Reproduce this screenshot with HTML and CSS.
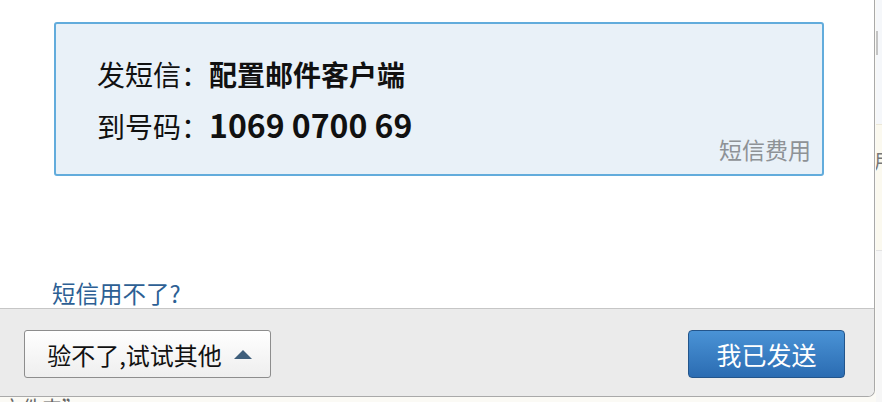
FILE: index.html
```html
<!DOCTYPE html>
<html lang="zh-CN">
<head>
<meta charset="utf-8">
<title>短信验证</title>
<link rel="stylesheet" href="styles.css">
</head>
<body>
<div class="page">
  <div class="page-main">
    <div class="page-foot">文件夹”</div>
  </div>
  <div class="page-side">
    <div class="side-top"><span class="side-thumb"></span></div>
    <div class="side-mid">用</div>
    <div class="side-low"></div>
  </div>
</div>

<div class="dialog">
  <div class="dialog-body">
    <div class="sms-box">
      <p class="sms-row"><span class="sms-label">发短信：</span><strong class="sms-value">配置邮件客户端</strong></p>
      <p class="sms-row"><span class="sms-label">到号码：</span><strong class="sms-value sms-num">1069 0700 69</strong></p>
      <span class="sms-fee">短信费用</span>
    </div>
    <a class="help-link" href="#">短信用不了?</a>
  </div>
  <div class="dialog-footer">
    <button class="btn btn-other" type="button">验不了,试试其他<span class="caret-up"></span></button>
    <button class="btn btn-primary" type="button">我已发送</button>
  </div>
</div>
</body>
</html>
```
FILE: styles.css
```css
html, body {
  margin: 0;
  padding: 0;
}
body {
  width: 882px;
  height: 402px;
  overflow: hidden;
  position: relative;
  background: #fbfaf5;
  font-family: "Noto Sans CJK SC", "Noto Sans", sans-serif;
  color: #111;
}

/* background page behind the dialog */
.page {
  display: grid;
  grid-template-columns: 1fr 6px;
  height: 402px;
}
.page-main {
  display: flex;
  flex-direction: column;
  justify-content: flex-end;
}
.page-foot {
  font-size: 20px;
  line-height: 20px;
  color: #666;
  margin-left: 2px;
  margin-bottom: -16px;
}
.page-side {
  display: flex;
  flex-direction: column;
}
.side-top {
  height: 124px;
  background: #f5f7fa;
  border-bottom: 1px solid #ece8d8;
}
.side-thumb {
  display: block;
  width: 2px;
  height: 24px;
  margin-top: 31px;
  background: #c4c4c4;
}
.side-mid {
  height: 125px;
  background: #fbf9ef;
  font-size: 20px;
  line-height: 20px;
  padding-top: 26px;
  box-sizing: border-box;
  color: #777;
  overflow: hidden;
  text-indent: -2px;
}
.side-low {
  flex: 1;
  background: #f6f6f6;
  border-top: 1px solid #e2e2e2;
}

/* dialog overlay */
.dialog {
  position: absolute;
  left: 0;
  top: 0;
  width: 875px;
  height: 397px;
  box-sizing: border-box;
  background: #fff;
  border-right: 1px solid #a9a9a9;
  border-bottom: 1px solid #a9a9a9;
  border-bottom-right-radius: 7px;
  display: flex;
  flex-direction: column;
  overflow: hidden;
}
.dialog-body {
  height: 308px;
  padding: 22px 0 0 54px;
  box-sizing: border-box;
  display: flex;
  flex-direction: column;
  align-items: flex-start;
}
.sms-box {
  position: relative;
  width: 770px;
  height: 154px;
  box-sizing: border-box;
  border: 2px solid #62acdc;
  border-radius: 3px;
  background: #e9f1f8;
  padding: 25px 0 0 41px;
}
.sms-row {
  margin: 0;
  font-size: 28px;
  line-height: 50px;
  height: 50px;
  white-space: nowrap;
}
.sms-label {
  font-weight: 400;
}
.sms-value {
  font-weight: 700;
}
.sms-num {
  font-size: 32px;
}
.sms-fee {
  position: absolute;
  right: 11px;
  bottom: 10px;
  font-size: 23px;
  line-height: 30px;
  color: #8e9296;
}
.help-link {
  margin-top: 102px;
  margin-left: -2px;
  font-size: 23.5px;
  line-height: 30px;
  color: #2d5f94;
  text-decoration: none;
}

.dialog-footer {
  flex: 1;
  background: #ebebeb;
  border-top: 1px solid #c6c6c6;
  display: flex;
  justify-content: space-between;
  align-items: flex-start;
  padding: 21px 29px 0 24px;
}
.btn {
  height: 48px;
  box-sizing: border-box;
  font-family: "Noto Sans CJK SC", "Noto Sans", sans-serif;
  padding: 0;
  margin: 0;
  display: flex;
  align-items: center;
  justify-content: center;
  cursor: pointer;
}
.btn-other {
  width: 247px;
  border: 1px solid #8d8d8d;
  border-radius: 3px;
  background: linear-gradient(#ffffff, #eeeeee);
  font-size: 24px;
  color: #111;
  gap: 12px;
  padding-left: 4px;
}
.caret-up {
  width: 0;
  height: 0;
  border-left: 9px solid transparent;
  border-right: 9px solid transparent;
  border-bottom: 9px solid #3e5e7b;
}
.btn-primary {
  width: 157px;
  border: 1px solid #23558b;
  border-radius: 4px;
  background: linear-gradient(#4a93d6, #2b6cb2);
  color: #fff;
  font-size: 25px;
}
```
